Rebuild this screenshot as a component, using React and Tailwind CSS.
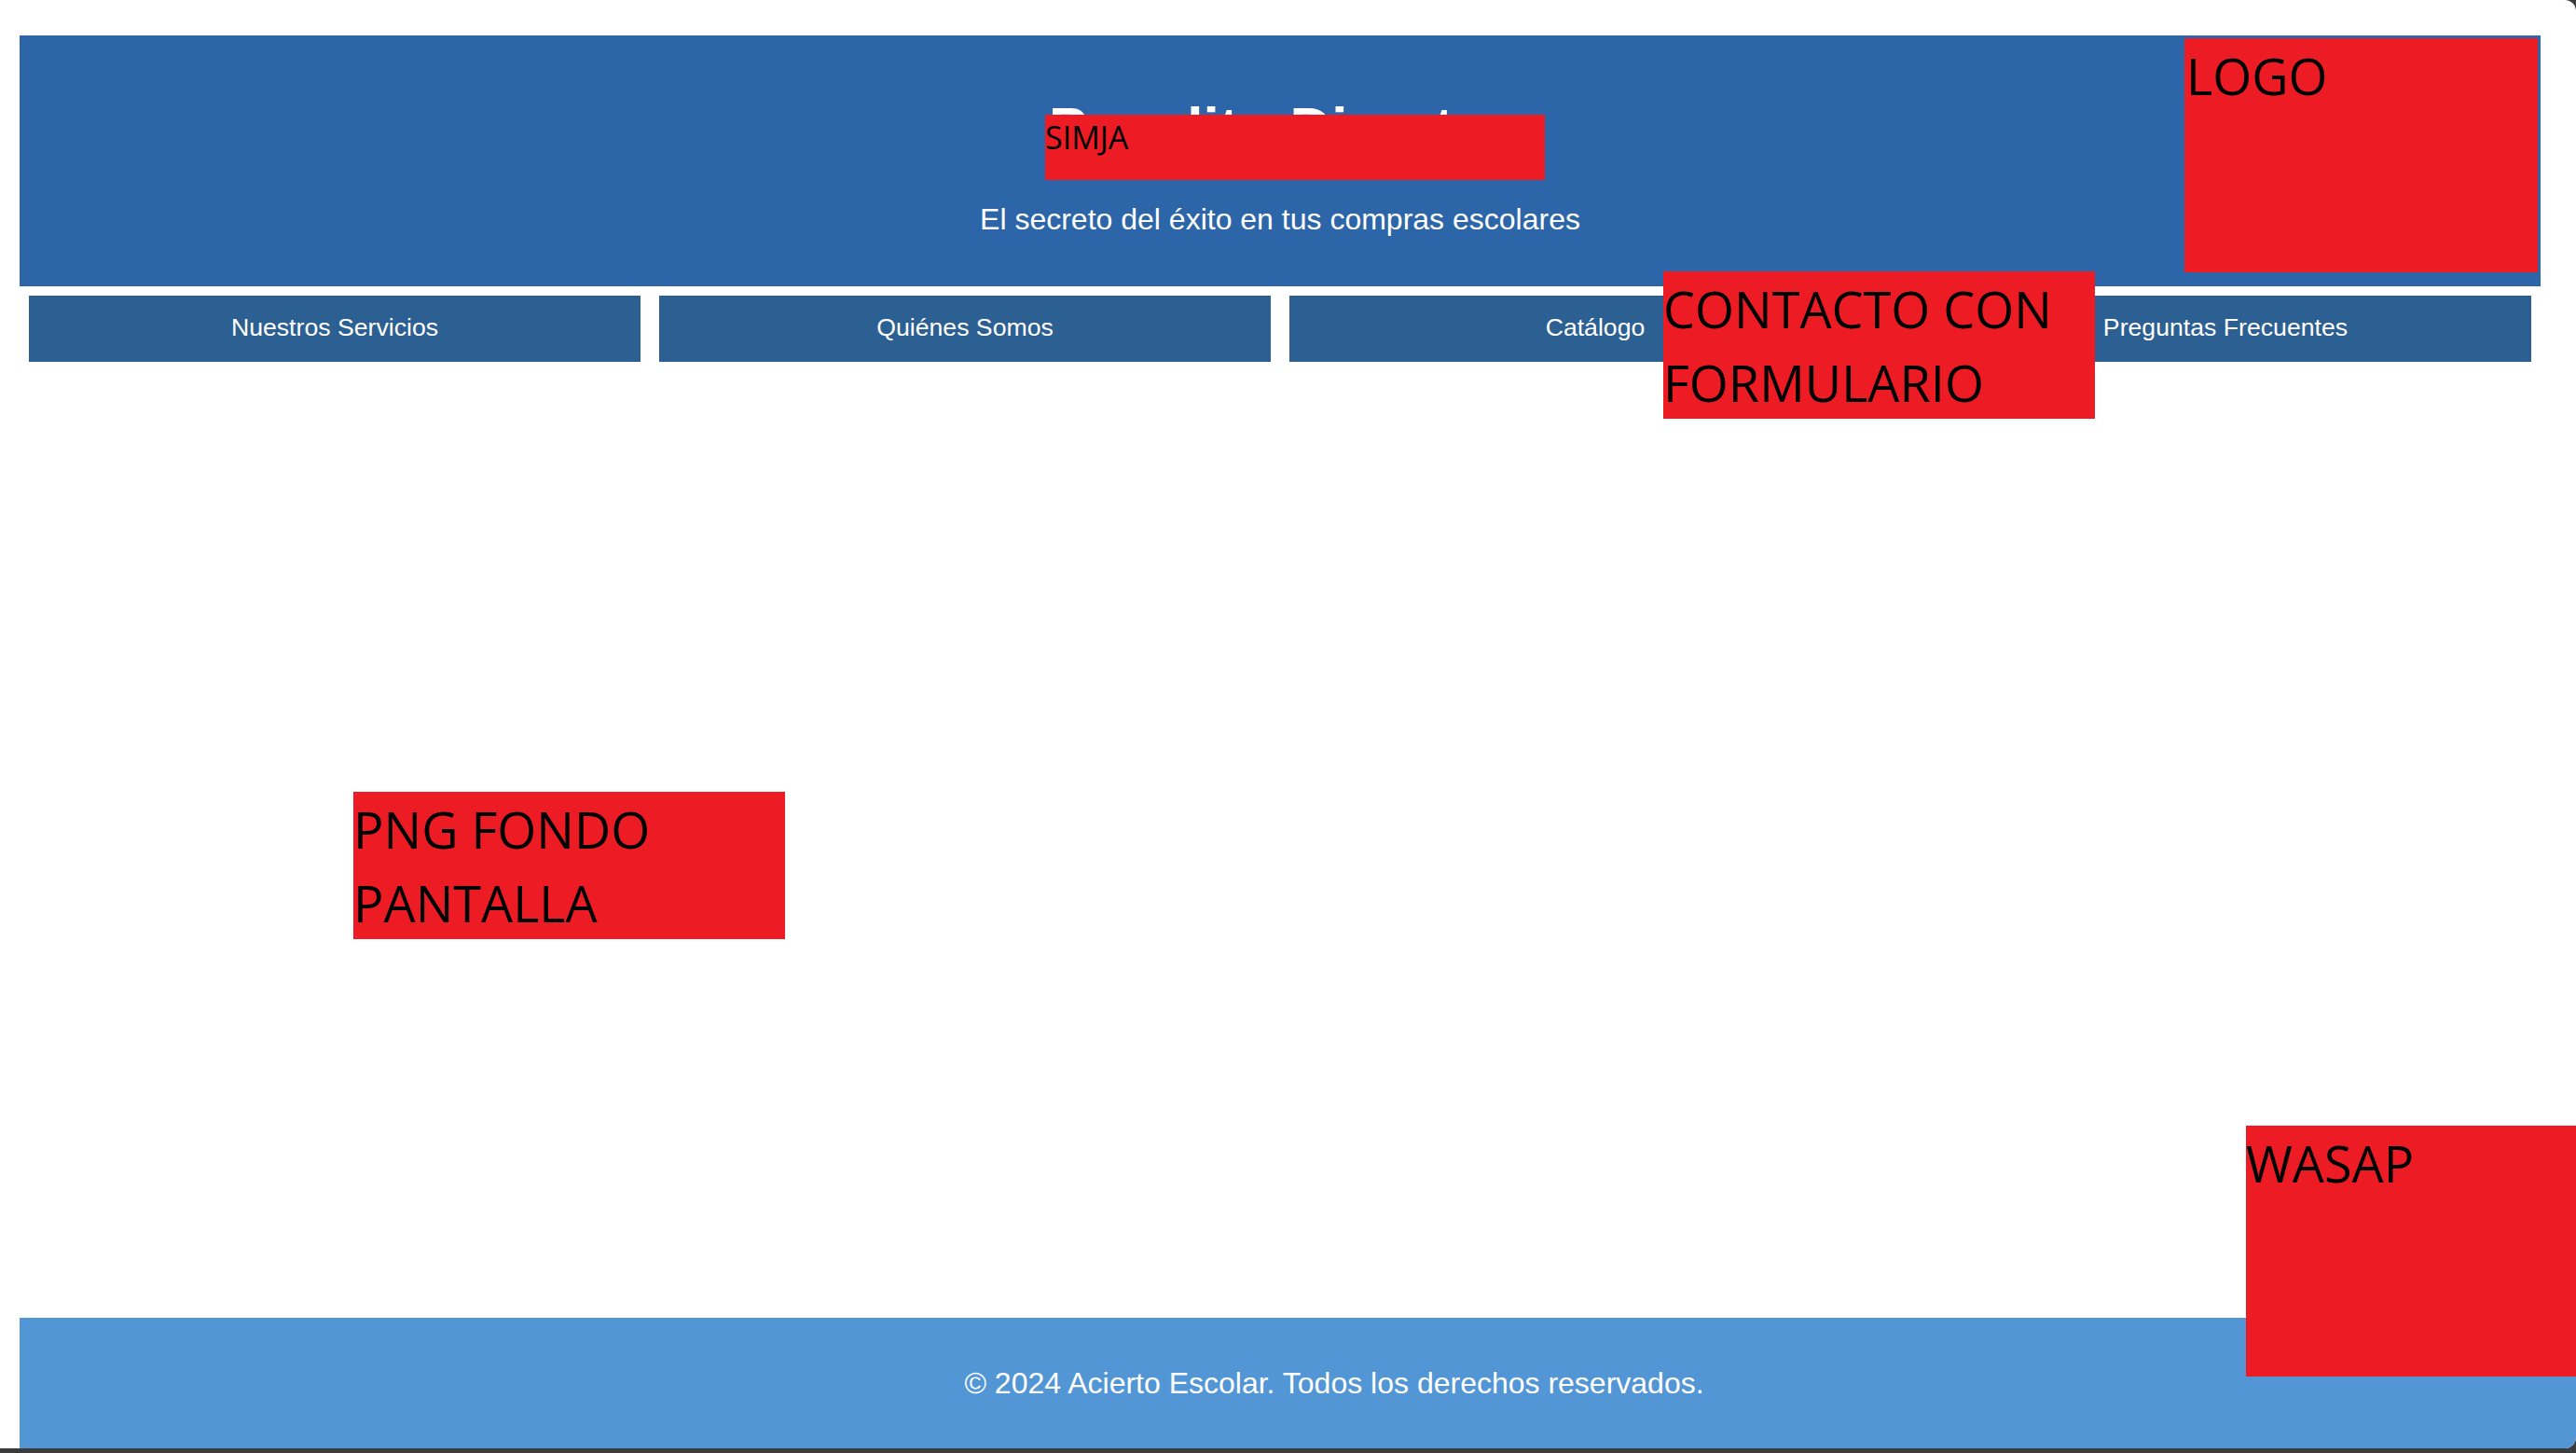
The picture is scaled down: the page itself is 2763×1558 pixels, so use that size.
import React from "react";

function Note({ className, children, textClass }) {
  return (
    <div className={`absolute bg-[#ed1c24] text-black ${className}`}>
      <div className={`font-['Open_Sans',sans-serif] ${textClass}`}>{children}</div>
    </div>
  );
}

export default function App() {
  const navItems = ["Nuestros Servicios", "Quiénes Somos", "Catálogo", "Preguntas Frecuentes"];
  return (
    <div className="w-full h-[1558px] bg-[#3b3b3b] overflow-hidden">
      <div className="relative flex flex-col h-[1553px] bg-white rounded-tr-[12px] rounded-br-[12px] overflow-hidden font-['Liberation_Sans',Arial,sans-serif]">
        <div className="ml-[21px] mr-[38px] mt-[38px]">
          <header className="h-[269px] bg-[#2d66a8] flex flex-col items-center text-white">
            <h1 className="mt-[63px] pr-[24px] text-[62px] leading-[71px] font-bold whitespace-nowrap">
              Papelito Directo
            </h1>
            <p className="mt-[45px] text-[32px] leading-[37px] whitespace-nowrap">
              El secreto del éxito en tus compras escolares
            </p>
          </header>
          <nav className="mt-[10px] px-[10px] flex gap-[20px]">
            {navItems.map((t) => (
              <a
                key={t}
                className="flex-1 h-[71px] pb-[3px] bg-[#2d6092] text-white text-[26.67px] flex items-center justify-center whitespace-nowrap"
              >
                {t}
              </a>
            ))}
          </nav>
        </div>

        <main className="flex-1" />

        <footer className="ml-[21px] h-[140px] pl-[78px] bg-[#5296d5] text-white text-[32px] flex items-center justify-center">
          <p>© 2024 Acierto Escolar. Todos los derechos reservados.</p>
        </footer>

        <Note className="left-[2343px] top-[41px] w-[379px] h-[251px] pl-[2px]" textClass="text-[54px] leading-[79px] mt-[1px]">
          LOGO
        </Note>
        <Note className="left-[1121px] top-[123px] w-[536px] h-[70px]" textClass="text-[34px] leading-[46px] mt-[1px]">
          SIMJA
        </Note>
        <Note className="left-[1784px] top-[291px] w-[463px] h-[158px]" textClass="text-[54px] leading-[79px] mt-[1px] whitespace-nowrap">
          CONTACTO CON
          <br />
          FORMULARIO
        </Note>
        <Note className="left-[379px] top-[849px] w-[463px] h-[158px]" textClass="text-[54px] leading-[79px] mt-[1px] whitespace-nowrap">
          PNG FONDO
          <br />
          PANTALLA
        </Note>
        <Note className="left-[2409px] top-[1207px] w-[354px] h-[269px]" textClass="text-[54px] leading-[79px] mt-[1px]">
          WASAP
        </Note>
      </div>
    </div>
  );
}
